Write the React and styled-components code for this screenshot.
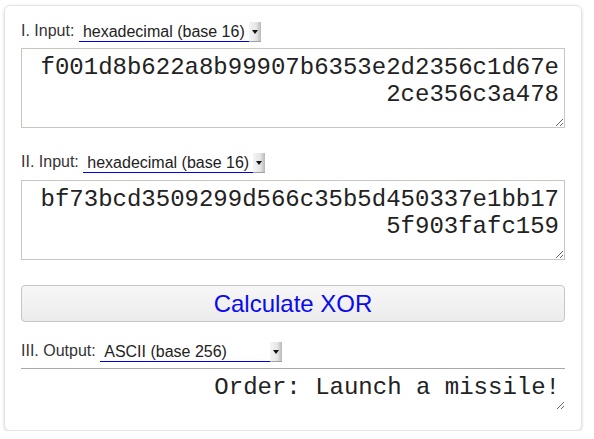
import React from "react";
import styled, { createGlobalStyle } from "styled-components";

const Global = createGlobalStyle`
  html, body { margin: 0; padding: 0; background: #ffffff; }
  body { font-family: "Liberation Sans", Arial, sans-serif; }
  * { box-sizing: border-box; }
`;

const Card = styled.div`
  margin: 5px 0 0 4px;
  width: 578px;
  padding: 16px 16px 20px 16px;
  border: 1px solid #e4e4e4;
  border-radius: 6px;
  box-shadow: 0 1px 3px rgba(0, 0, 0, 0.18);
  display: flex;
  flex-direction: column;
`;

const Row = styled.div`
  display: flex;
  align-items: flex-end;
  height: 20px;
  margin-top: ${(p) => p.$mt || 0}px;
`;

const Label = styled.label`
  font-family: "Liberation Sans", Arial, sans-serif;
  font-size: 16px;
  line-height: 18px;
  color: #333333;
  margin-right: 4.5px;
  padding-bottom: 2px;
  white-space: nowrap;
`;

const SelectBox = styled.div`
  position: relative;
  width: 182px;
  height: 20px;
  border-bottom: 1px solid #0000ee;
`;

const NativeSelect = styled.select`
  appearance: none;
  -webkit-appearance: none;
  border: none;
  outline: none;
  background: transparent;
  width: 100%;
  height: 19px;
  padding: 0 0 0 4px;
  margin: 0;
  font-family: "Liberation Sans", Arial, sans-serif;
  font-size: 16px;
  line-height: 18px;
  color: #222222;
`;

const Arrow = styled.span`
  position: absolute;
  right: 0;
  top: 0;
  bottom: -1px;
  width: 12px;
  background: linear-gradient(to right, #f4f4f4 0%, #e6e6e6 60%, #b8b8b8 100%);
  border-bottom: 1px solid #a0a0a0;
  pointer-events: none;
  &::after {
    content: "";
    position: absolute;
    left: 3px;
    top: 8px;
    border-left: 3px solid transparent;
    border-right: 3px solid transparent;
    border-top: 4px solid #111111;
  }
`;

const Area = styled.textarea`
  display: block;
  width: 100%;
  height: ${(p) => p.$h}px;
  margin: ${(p) => p.$mt}px 0 0 0;
  padding: 5px;
  font-family: "Liberation Mono", "Courier New", monospace;
  font-size: 24px;
  line-height: 27px;
  color: #222222;
  text-align: right;
  border: 1px solid #c9c5bf;
  background: #ffffff;
  outline: none;
  word-break: break-all;
  overflow: hidden;
  ${(p) =>
    p.$plain &&
    `
    border: none;
    border-top: 1px solid #a8a8a8;
  `}
`;

const Button = styled.button`
  display: block;
  width: 100%;
  height: 37px;
  margin-top: ${(p) => p.$mt}px;
  padding: 0;
  border: 1px solid #c9c5bf;
  border-radius: 4px;
  background: linear-gradient(to bottom, #f7f7f7 0%, #ececec 100%);
  font-family: "Liberation Sans", Arial, sans-serif;
  font-size: 24px;
  color: #0a0aee;
  cursor: pointer;
`;

function Picker({ value }) {
  return (
    <SelectBox>
      <NativeSelect defaultValue={value}>
        <option>{value}</option>
      </NativeSelect>
      <Arrow />
    </SelectBox>
  );
}

export default function App() {
  return (
    <>
      <Global />
      <Card>
        <Row>
          <Label>I. Input:</Label>
          <Picker value="hexadecimal (base 16)" />
        </Row>
        <Area
          $h={80}
          $mt={6}
          spellCheck={false}
          defaultValue="f001d8b622a8b99907b6353e2d2356c1d67e2ce356c3a478"
        />
        <Row $mt={25}>
          <Label>II. Input:</Label>
          <Picker value="hexadecimal (base 16)" />
        </Row>
        <Area
          $h={80}
          $mt={7}
          spellCheck={false}
          defaultValue="bf73bcd3509299d566c35b5d450337e1bb175f903fafc159"
        />
        <Button $mt={25}>Calculate XOR</Button>
        <Row $mt={20}>
          <Label>III. Output:</Label>
          <Picker value="ASCII (base 256)" />
        </Row>
        <Area
          $h={42}
          $mt={6}
          $plain
          spellCheck={false}
          readOnly
          defaultValue="Order: Launch a missile!"
        />
      </Card>
    </>
  );
}
